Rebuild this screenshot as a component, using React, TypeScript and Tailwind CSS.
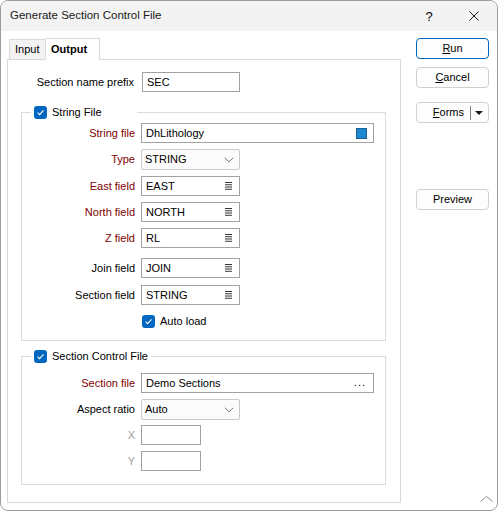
import React from "react";

function Check() {
  return (
    <span className="w-[13px] h-[13px] rounded-[3px] bg-[#0067c0] flex items-center justify-center shrink-0">
      <svg width="9" height="9" viewBox="0 0 9 9">
        <path d="M1.6 4.7 L3.6 6.7 L7.5 2.3" fill="none" stroke="white" strokeWidth="1.1" />
      </svg>
    </span>
  );
}

function Lines() {
  return (
    <svg width="7" height="8" viewBox="0 0 7 8" className="shrink-0">
      <path d="M0 0.5H7M0 2.75H7M0 5H7M0 7.25H7" stroke="#333" strokeWidth="1" />
    </svg>
  );
}

function Chevron() {
  return (
    <svg width="10" height="6" viewBox="0 0 10 6" className="shrink-0">
      <path d="M0.8 0.8 L5 4.8 L9.2 0.8" fill="none" stroke="#666" strokeWidth="0.9" />
    </svg>
  );
}

function TextBox({ value, w, icon }: { value?: string; w: string; icon?: React.ReactNode }) {
  return (
    <div className={`${w} h-full border border-[#a2a2a2] bg-white flex items-center pl-[4px] pr-[7px]`}>
      <span className="flex-1 truncate">{value}</span>
      {icon}
    </div>
  );
}

function Combo({ value }: { value: string }) {
  return (
    <div className="w-[99px] h-full border border-[#c9c9c9] rounded-[2px] bg-[#fbfbfb] flex items-center pl-[3px] pr-[5px]">
      <span className="flex-1">{value}</span>
      <Chevron />
    </div>
  );
}

function Row({
  label,
  color,
  className,
  children,
}: {
  label: string;
  color: string;
  className: string;
  children: React.ReactNode;
}) {
  return (
    <div className={`flex items-center ${className}`}>
      <span className={`w-[113px] text-right ${color}`}>{label}</span>
      <div className="ml-[6px] h-full flex">{children}</div>
    </div>
  );
}

function Button({ children, primary, className }: { children: React.ReactNode; primary?: boolean; className: string }) {
  return (
    <div
      className={`w-[73px] h-[21px] rounded-[4px] bg-[#fdfdfd] border flex items-center justify-center ${
        primary ? "border-[#0067c0]" : "border-[#d0d0d0]"
      } ${className}`}
    >
      {children}
    </div>
  );
}

const RED = "text-[#800000]";
const BLK = "text-black";
const GRY = "text-[#a0a0a0]";

export default function App() {
  return (
    <div className="relative w-[498px] h-[511px] bg-white border border-[#9c9c9c] rounded-[8px] overflow-hidden flex flex-col font-['Liberation_Sans',Arial,sans-serif] text-[11px] text-black leading-none">
      {/* title bar */}
      <div className="h-[30px] bg-[#f3f3f3] flex items-center pl-[9px] shrink-0">
        <span className="text-[11.5px] text-[#1a1a1a]">Generate Section Control File</span>
        <div className="ml-auto flex items-center mr-[18px]">
          <span className="w-[10px] text-center text-[13px]">?</span>
          <svg width="10" height="10" viewBox="0 0 10 10" className="ml-[35px]">
            <path d="M0.5 0.5 L9.5 9.5 M9.5 0.5 L0.5 9.5" stroke="#1a1a1a" strokeWidth="1" />
          </svg>
        </div>
      </div>

      {/* body */}
      <div className="flex flex-1">
        <div className="ml-[6px] flex flex-col">
          {/* tabs */}
          <div className="mt-[7px] h-[21px] flex items-end pl-[2px] relative z-10">
            <div className="w-[36px] h-[20px] border-t border-l border-[#d9d9d9] bg-[#f3f3f3] flex items-center pl-[5px]">
              Input
            </div>
            <div className="w-[55px] h-[22px] -mb-px border-t border-l border-r border-[#d9d9d9] bg-white flex items-center pl-[5px] font-bold">
              Output
            </div>
          </div>

          {/* panel */}
          <div className="w-[394px] h-[444px] border border-[#d9d9d9] bg-white flex flex-col">
            <div className="mt-[12px] h-[20px] flex items-center">
              <span className="w-[126px] text-right">Section name prefix</span>
              <div className="ml-[8px] h-full flex">
                <TextBox value="SEC" w="w-[98px]" />
              </div>
            </div>

            <fieldset className="ml-[13px] mt-[13px] w-[365px] border border-[#dcdcdc] pb-[12px]">
              <legend className="ml-[9px] px-[3px]">
                <span className="flex items-center h-[14px] w-[100px] gap-[5px]">
                  <Check />
                  <span>String File</span>
                </span>
              </legend>
              <Row label="String file" color={RED} className="mt-[4px] h-[20px]">
                <TextBox
                  value="DhLithology"
                  w="w-[233px]"
                  icon={<span className="w-[11px] h-[11px] bg-[#1e88d2] border border-[#1b5f94] mr-[-1px]" />}
                />
              </Row>
              <Row label="Type" color={RED} className="mt-[6px] h-[21px]">
                <Combo value="STRING" />
              </Row>
              <Row label="East field" color={RED} className="mt-[6px] h-[20px]">
                <TextBox value="EAST" w="w-[99px]" icon={<Lines />} />
              </Row>
              <Row label="North field" color={RED} className="mt-[6px] h-[20px]">
                <TextBox value="NORTH" w="w-[99px]" icon={<Lines />} />
              </Row>
              <Row label="Z field" color={RED} className="mt-[6px] h-[20px]">
                <TextBox value="RL" w="w-[99px]" icon={<Lines />} />
              </Row>
              <Row label="Join field" color={BLK} className="mt-[10px] h-[20px]">
                <TextBox value="JOIN" w="w-[99px]" icon={<Lines />} />
              </Row>
              <Row label="Section field" color={BLK} className="mt-[7px] h-[20px]">
                <TextBox value="STRING" w="w-[99px]" icon={<Lines />} />
              </Row>
              <div className="mt-[10px] h-[13px] flex items-center pl-[120px] gap-[5px]">
                <Check />
                <span>Auto load</span>
              </div>
            </fieldset>

            <fieldset className="ml-[13px] mt-[8px] w-[365px] border border-[#dcdcdc] pb-[13px]">
              <legend className="ml-[9px] px-[3px]">
                <span className="flex items-center h-[14px] gap-[5px]">
                  <Check />
                  <span>Section Control File</span>
                </span>
              </legend>
              <Row label="Section file" color={RED} className="mt-[10px] h-[20px]">
                <TextBox
                  value="Demo Sections"
                  w="w-[233px]"
                  icon={<span className="text-[11px] tracking-[1px] self-end mb-[4px]">...</span>}
                />
              </Row>
              <Row label="Aspect ratio" color={BLK} className="mt-[6px] h-[21px]">
                <Combo value="Auto" />
              </Row>
              <Row label="X" color={GRY} className="mt-[5px] h-[20px]">
                <TextBox w="w-[60px]" />
              </Row>
              <Row label="Y" color={GRY} className="mt-[6px] h-[20px]">
                <TextBox w="w-[60px]" />
              </Row>
            </fieldset>
          </div>
        </div>

        {/* buttons */}
        <div className="ml-[15px] flex flex-col">
          <Button primary className="mt-[7px]">
            <span>
              <span className="underline">R</span>un
            </span>
          </Button>
          <Button className="mt-[8px]">
            <span>
              <span className="underline">C</span>ancel
            </span>
          </Button>
          <Button className="mt-[14px] !justify-end">
            <span>
              <span className="underline">F</span>orms
            </span>
            <span className="ml-[6px] w-px h-[14px] bg-[#808080]" />
            <svg width="8" height="4" viewBox="0 0 8 4" className="ml-[4px] mr-[5px]">
              <path d="M0 0 H8 L4 4 Z" fill="#1a1a1a" />
            </svg>
          </Button>
          <Button className="mt-[66px]">Preview</Button>
        </div>
      </div>

      {/* size grip */}
      <svg width="13" height="6" viewBox="0 0 13 6" className="absolute right-[4px] bottom-[8px]">
        <polyline points="0.5,5.5 6.5,0.5 12.5,5.5" fill="none" stroke="#8a8a8a" strokeWidth="1" />
      </svg>
    </div>
  );
}
